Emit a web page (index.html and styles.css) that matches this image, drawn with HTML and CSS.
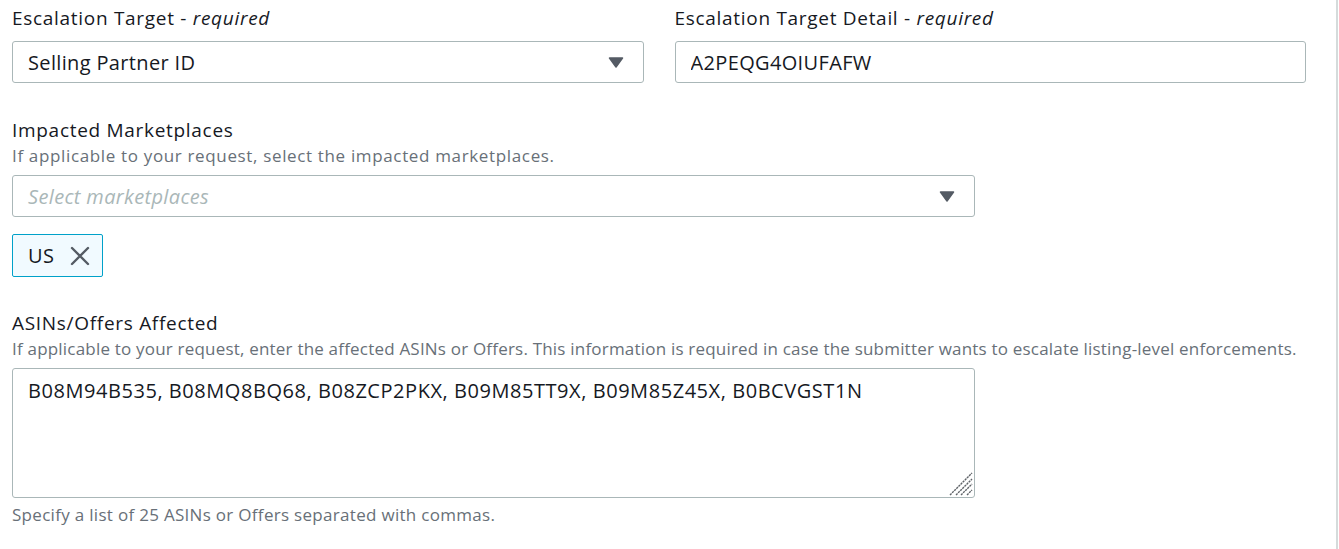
FILE: index.html
```html
<!DOCTYPE html>
<html lang="en">
<head>
    <meta charset="UTF-8">
    <meta name="viewport" content="width=device-width, initial-scale=1.0">
    <title>Escalation</title>
    <link rel="stylesheet" href="styles.css">
</head>
<body>
    <div class="page">
        <form class="escalationForm">
            <div class="fieldRow">
                <div class="field">
                    <label class="fieldLabel">Escalation Target - <i>required</i></label>
                    <div class="selectBox">
                        <span class="selectValue">Selling Partner ID</span>
                        <svg class="caret" width="16" height="11" viewBox="0 0 16 11">
                            <path d="M1.5 1 H14.5 L8 10 Z" fill="#545b64" stroke="#545b64" stroke-width="1.5" stroke-linejoin="round"/>
                        </svg>
                    </div>
                </div>
                <div class="field">
                    <label class="fieldLabel">Escalation Target Detail - <i>required</i></label>
                    <input class="textInput" type="text" value="A2PEQG4OIUFAFW">
                </div>
            </div>

            <div class="field wide">
                <label class="fieldLabel">Impacted Marketplaces</label>
                <div class="fieldDesc short">If applicable to your request, select the impacted marketplaces.</div>
                <div class="selectBox multi">
                    <span class="placeholder">Select marketplaces</span>
                    <svg class="caret" width="16" height="11" viewBox="0 0 16 11">
                        <path d="M1.5 1 H14.5 L8 10 Z" fill="#545b64" stroke="#545b64" stroke-width="1.5" stroke-linejoin="round"/>
                    </svg>
                </div>
                <div class="tokenList">
                    <span class="token">
                        US
                        <svg class="tokenRemove" width="20" height="20" viewBox="0 0 20 20">
                            <path d="M2 2 L18 18 M18 2 L2 18" stroke="#545b64" stroke-width="2.4" stroke-linecap="round" fill="none"/>
                        </svg>
                    </span>
                </div>
            </div>

            <div class="field wide asins">
                <label class="fieldLabel">ASINs/Offers Affected</label>
                <div class="fieldDesc">If applicable to your request, enter the affected ASINs or Offers. This information is required in case the submitter wants to escalate listing-level enforcements.</div>
                <div class="textAreaWrap">
                    <textarea class="textArea">B08M94B535, B08MQ8BQ68, B08ZCP2PKX, B09M85TT9X, B09M85Z45X, B0BCVGST1N</textarea>
                    <!-- grip drawn by hand so it looks the same everywhere -->
                    <svg class="resizeGrip" width="24" height="24" viewBox="0 0 24 24">
                        <path d="M1 23 L23 1 M7 23 L23 7 M12 23 L23 12 M18 23 L23 18" stroke="#5f6368" stroke-width="1.4" stroke-dasharray="2.2 0.8" fill="none"/>
                    </svg>
                </div>
                <div class="fieldHint">Specify a list of 25 ASINs or Offers separated with commas.</div>
            </div>
        </form>
        <div class="scrollEdge"></div>
    </div>
</body>
</html>
```

FILE: styles.css
```css
body {
    margin: 0;
    padding: 0;
    background-color: #ffffff;
    color: #16191f;
    font-family: 'Open Sans', 'Liberation Sans', sans-serif;
}

.page {
    display: flex;
    min-height: 100vh;
}

.escalationForm {
    flex: 1;
    min-width: 0;
    padding: 6px 30px 0 12px;
}

.fieldRow {
    display: flex;
    gap: 31px;
}

.fieldRow .field {
    flex: 1;
}

.field {
    display: flex;
    flex-direction: column;
}

.field.wide {
    margin-top: 35px;
}

.field.asins {
    margin-top: 34px;
}

.fieldLabel {
    font-size: 19px;
    letter-spacing: 0.7px;
    line-height: 24px;
    margin-bottom: 11px;
}

.wide .fieldLabel {
    margin-bottom: 0;
}

.fieldDesc {
    font-size: 17px;
    letter-spacing: 0.2px;
    line-height: 22px;
    color: #687078;
    white-space: nowrap;
    margin-top: 3px;
    margin-bottom: 8px;
}

.fieldDesc.short {
    letter-spacing: 0.65px;
    margin-bottom: 7px;
}

.selectBox, .textInput {
    box-sizing: border-box;
    height: 42px;
    border: 1px solid #aab7b8;
    border-radius: 3px;
    background: #ffffff;
    font-family: inherit;
    font-size: 20px;
    letter-spacing: 0.35px;
    color: #16191f;
}

.selectBox {
    display: flex;
    align-items: center;
    justify-content: space-between;
    padding: 0 19px 0 15px;
}

.selectBox.multi {
    width: 963px;
    margin-top: 1px;
}

.placeholder {
    font-style: italic;
    color: #aab7b8;
}

.textInput {
    width: 100%;
    padding: 0 15px;
    outline: none;
}

.tokenList {
    display: flex;
    margin-top: 17px;
}

.token {
    box-sizing: border-box;
    display: flex;
    align-items: center;
    gap: 16px;
    height: 43px;
    padding: 0 12px 0 15px;
    border: 1px solid #00a1c9;
    border-radius: 2px;
    background: #f1faff;
    font-size: 20px;
    letter-spacing: 0.3px;
}

.textAreaWrap {
    position: relative;
    width: 963px;
    height: 130px;
}

.textArea {
    box-sizing: border-box;
    display: block;
    width: 100%;
    height: 100%;
    padding: 10px 15px;
    border: 1px solid #aab7b8;
    border-radius: 3px;
    font-family: inherit;
    font-size: 20px;
    letter-spacing: 0.55px;
    line-height: 24px;
    color: #16191f;
    resize: none;
    outline: none;
}

.resizeGrip {
    position: absolute;
    right: 2px;
    bottom: 2px;
}

.fieldHint {
    font-size: 17px;
    letter-spacing: 0.3px;
    line-height: 22px;
    color: #687078;
    margin-top: 6px;
}

.scrollEdge {
    width: 1px;
    border-left: 2px solid #d5dbdb;
}
```
